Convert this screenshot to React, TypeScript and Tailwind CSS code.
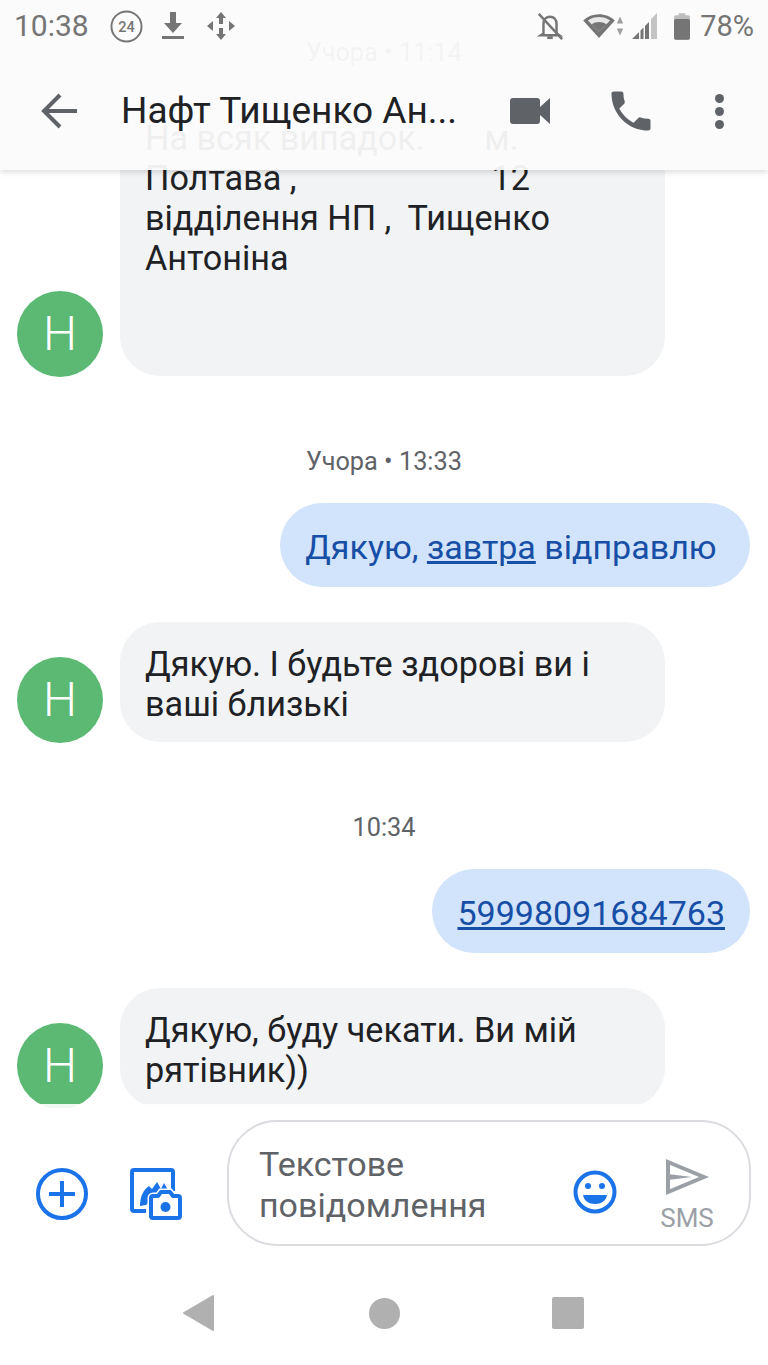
const sans = "font-['Roboto',sans-serif]";

const Avatar = () => (
  <div className="-mb-px flex h-[86px] w-[86px] shrink-0 items-center justify-center rounded-full bg-[#5bb974] text-[48px] font-light leading-none text-white">
    Н
  </div>
);

const Stamp = ({ text }: { text: string }) => (
  <div className="text-center text-[25.3px] leading-[34px] text-[#5f6368]">{text}</div>
);

const Incoming = ({ lines }: { lines: string[] }) => (
  <div className="flex items-end pl-[17px]">
    <Avatar />
    <div className="ml-[17px] w-[545px] rounded-[40px] bg-[#f1f3f4] pb-[18px] pl-[26px] pr-[26px] pt-[22px] text-[34.2px] leading-[40px] text-[#202124]">
      {lines.map((l, i) => (
        <div key={i} className="-ml-px h-[40px] whitespace-pre">
          {l}
        </div>
      ))}
    </div>
  </div>
);

const Outgoing = ({ children }: { children: React.ReactNode }) => (
  <div className="flex justify-end pr-[18px]">
    <div className="rounded-[42px] bg-[#d2e3fc] px-[25px] pb-[20px] pt-[24px] text-[34px] leading-[40px] text-[#174ea6]">
      {children}
    </div>
  </div>
);

export default function App() {
  return (
    <div className={`relative flex h-[1365px] w-[768px] flex-col overflow-hidden bg-white ${sans}`}>
      {/* conversation, scrolled behind the bar */}
      <div className="h-[1108px] shrink-0 overflow-hidden pt-[36px]">
        <Stamp text="Учора • 11:14" />
        <div className="mt-[26px]">
          <Incoming
            lines={[
              "На всяк випадок.       м.",
              "Полтава ,                       12",
              "відділення НП ,  Тищенко",
              "Антоніна",
              "",
              "",
            ]}
          />
        </div>
        <div className="mt-[69px]">
          <Stamp text="Учора • 13:33" />
        </div>
        <div className="mt-[24px]">
          <Outgoing>
            Дякую, <span className="underline">завтра</span> відправлю{"\u00a0"}
          </Outgoing>
        </div>
        <div className="mt-[35px]">
          <Incoming lines={["Дякую. І будьте здорові ви і", "ваші близькі"]} />
        </div>
        <div className="mt-[69px]">
          <Stamp text="10:34" />
        </div>
        <div className="mt-[24px]">
          <Outgoing>
            <span className="underline">59998091684763</span>
          </Outgoing>
        </div>
        <div className="mt-[35px]">
          <Incoming lines={["Дякую, буду чекати. Ви мій", "рятівник))"]} />
        </div>
      </div>

      {/* status bar + app bar, translucent over the messages */}
      <div className="absolute inset-x-0 top-0 h-[170px] bg-[#fbfbfb]/95 shadow-[0_2px_6px_rgba(0,0,0,0.15)]">
        <div className="flex h-[52px] items-center pl-[14px] pr-[14px] text-[#757575]">
          <span className="text-[30px] leading-none">10:38</span>
          <svg className="ml-[21px]" width="33" height="33" viewBox="0 0 34 34">
            <circle cx="17" cy="17" r="15.500" fill="none" stroke="#757575" strokeWidth="2" />
            <text x="17" y="22.500" textAnchor="middle" fontSize="15" fontWeight="500" fill="#757575">
              24
            </text>
          </svg>
          <svg className="ml-[18px]" width="24" height="30" viewBox="0 0 24 30" fill="#757575">
            <path d="M9 1h6v11h6l-9 10-9-10h6z" />
            <rect x="1" y="25" width="22" height="3" />
          </svg>
          <svg className="ml-[21px]" width="30" height="30" viewBox="0 0 30 30" fill="#757575">
            <path d="M15 1l5 6h-3v6h-4V7h-3zM15 29l-5-6h3v-6h4v6h3zM1 15l6-5v10zM29 15l-6-5v10z" />
          </svg>
          <div className="flex-1" />
          <svg width="28" height="30" viewBox="0 0 30 30" fill="none">
            <path d="M8 23V13c0-5 3-8 7-8s7 3 7 8v10l3 2H5z" stroke="#757575" strokeWidth="2.600" />
            <rect x="12" y="26" width="6" height="3" fill="#757575" />
            <path d="M3 2l25 27" stroke="#757575" strokeWidth="2.600" />
          </svg>
          <svg className="ml-[19px]" width="32" height="26" viewBox="0 0 34 28" fill="#757575">
            <path d="M17 27L0 8C9-1 25-1 34 8z" />
            <path d="M17 20L5 8c7-5 17-5 24 0z" fill="#e8e8e8" />
            <path d="M17 20L9 12c5-3 11-3 16 0z" />
          </svg>
          <svg className="ml-[1px]" width="8" height="26" viewBox="0 0 10 26" fill="#9e9e9e">
            <path d="M5 1l4 9H1zM5 25l-4-9h8z" />
          </svg>
          <svg className="ml-[8px]" width="25" height="26" viewBox="0 0 25 26">
            <path d="M19 6l6-6v26h-6z" fill="#c4c4c4" />
            <path d="M0 26l7-7v7zM8.500 17.500l3-3V26h-3zM13 13l4-4v17h-4z" fill="#757575" />
          </svg>
          <svg className="ml-[17px]" width="16" height="27" viewBox="0 0 17 28" fill="#757575">
            <rect x="5" y="0" width="7" height="3" fill="#bdbdbd" />
            <rect x="0" y="2" width="17" height="26" rx="2" fill="#bdbdbd" />
            <rect x="0" y="6" width="17" height="22" rx="2" />
          </svg>
          <span className="ml-[10px] text-[29px] leading-none">78%</span>
        </div>

        <div className="flex h-[118px] items-center">
          <svg className="ml-[40px]" width="40" height="40" viewBox="0 0 40 40" fill="none" stroke="#5f6368" strokeWidth="4">
            <path d="M37 20H5M20 4L4 20l16 16" />
          </svg>
          <div className="ml-[41px] w-[345px] whitespace-nowrap text-[37px] leading-[46px] text-[#202124]">
            Нафт Тищенко Ан...
          </div>
          <svg className="ml-[44px]" width="40" height="28" viewBox="0 0 40 28" fill="#5f6368">
            <path d="M3 1h24a3 3 0 0 1 3 3v6l10-9v26l-10-9v6a3 3 0 0 1-3 3H3a3 3 0 0 1-3-3V4a3 3 0 0 1 3-3z" />
          </svg>
          <svg className="ml-[55px]" width="52" height="52" viewBox="0 0 24 24" fill="#5f6368">
            <path d="M6.600 10.800c1.400 2.800 3.800 5.100 6.600 6.600l2.200-2.200c.3-.3.7-.4 1-.2 1.100.4 2.300.6 3.600.6.6 0 1 .4 1 1V20c0 .6-.4 1-1 1C10.600 21 3 13.400 3 4c0-.6.4-1 1-1h3.500c.6 0 1 .4 1 1 0 1.300.2 2.500.6 3.600.1.300 0 .7-.2 1z" />
          </svg>
          <div className="ml-[58px] flex flex-col gap-[4px]">
            <div className="h-[9px] w-[9px] rounded-full bg-[#5f6368]" />
            <div className="h-[9px] w-[9px] rounded-full bg-[#5f6368]" />
            <div className="h-[9px] w-[9px] rounded-full bg-[#5f6368]" />
          </div>
        </div>
      </div>

      {/* composer */}
      <div className="relative -mt-[4px] flex h-[142px] shrink-0 items-end bg-white/90">
        <svg className="mb-[26px] ml-[36px]" width="52" height="52" viewBox="0 0 52 52" fill="none" stroke="#1a73e8" strokeWidth="4">
          <circle cx="26" cy="26" r="24" />
          <path d="M26 13v26M13 26h26" />
        </svg>
        <svg className="mb-[26px] ml-[42px]" width="52" height="52" viewBox="0 0 52 52">
          <path d="M16 43H4a2 2 0 0 1-2-2V4a2 2 0 0 1 2-2h37a2 2 0 0 1 2 2v19" fill="none" stroke="#1a73e8" strokeWidth="4" />
          <path d="M10 38c0-9 3-16 9-20l3 3 5-7 4 7 3-6 8 14H24l-8 8z" fill="#1a73e8" />
          <path d="M23 28h5l3-4h9l3 4h5a2 2 0 0 1 2 2v18a2 2 0 0 1-2 2H23a2 2 0 0 1-2-2V30a2 2 0 0 1 2-2z" fill="#fff" stroke="#fff" strokeWidth="7" />
          <path d="M23 28h5l3-4h9l3 4h5a2 2 0 0 1 2 2v18a2 2 0 0 1-2 2H23a2 2 0 0 1-2-2V30a2 2 0 0 1 2-2z" fill="#fff" stroke="#1a73e8" strokeWidth="4" strokeLinejoin="round" />
          <circle cx="35.500" cy="39" r="5" fill="#1a73e8" />
        </svg>
        <div className="ml-[45px] flex h-[126px] w-[524px] items-center rounded-[50px] border-2 border-[#dadce0] pl-[30px]">
          <div className="mt-[4px] w-[300px] text-[34px] leading-[41px] text-[#5f6368]">
            Текстове повідомлення
          </div>
          <svg className="ml-[14px] mt-[18px]" width="44" height="44" viewBox="0 0 44 44" fill="none">
            <circle cx="22" cy="22" r="19.500" stroke="#1a73e8" strokeWidth="4" />
            <circle cx="15" cy="16" r="3" fill="#1a73e8" />
            <circle cx="29" cy="16" r="3" fill="#1a73e8" />
            <path d="M10 25h24c-1 6-6 9-12 9s-11-3-12-9z" fill="#1a73e8" />
          </svg>
          <div className="ml-[44px] mt-[22px] flex w-[52px] flex-col items-center">
            <svg width="44" height="38" viewBox="0 0 44 38" fill="none">
              <path d="M3 4l36 15L3 34z" stroke="#9aa0a6" strokeWidth="4" strokeLinejoin="miter" />
              <path d="M3 16l24 3-24 3z" fill="#9aa0a6" />
            </svg>
            <span className="mt-[9px] text-[26px] leading-[26px] text-[#9aa0a6]">SMS</span>
          </div>
        </div>
      </div>

      {/* navigation bar */}
      <div className="mt-[49px] flex items-center">
        <svg className="ml-[183px]" width="32" height="36" viewBox="0 0 32 36" fill="#b0b0b0">
          <path d="M30 1v34L1 18z" stroke="#b0b0b0" strokeWidth="2" strokeLinejoin="round" />
        </svg>
        <div className="ml-[154px] h-[31px] w-[31px] rounded-full bg-[#b0b0b0]" />
        <div className="ml-[152px] h-[32px] w-[32px] rounded-[2px] bg-[#b0b0b0]" />
      </div>
    </div>
  );
}
